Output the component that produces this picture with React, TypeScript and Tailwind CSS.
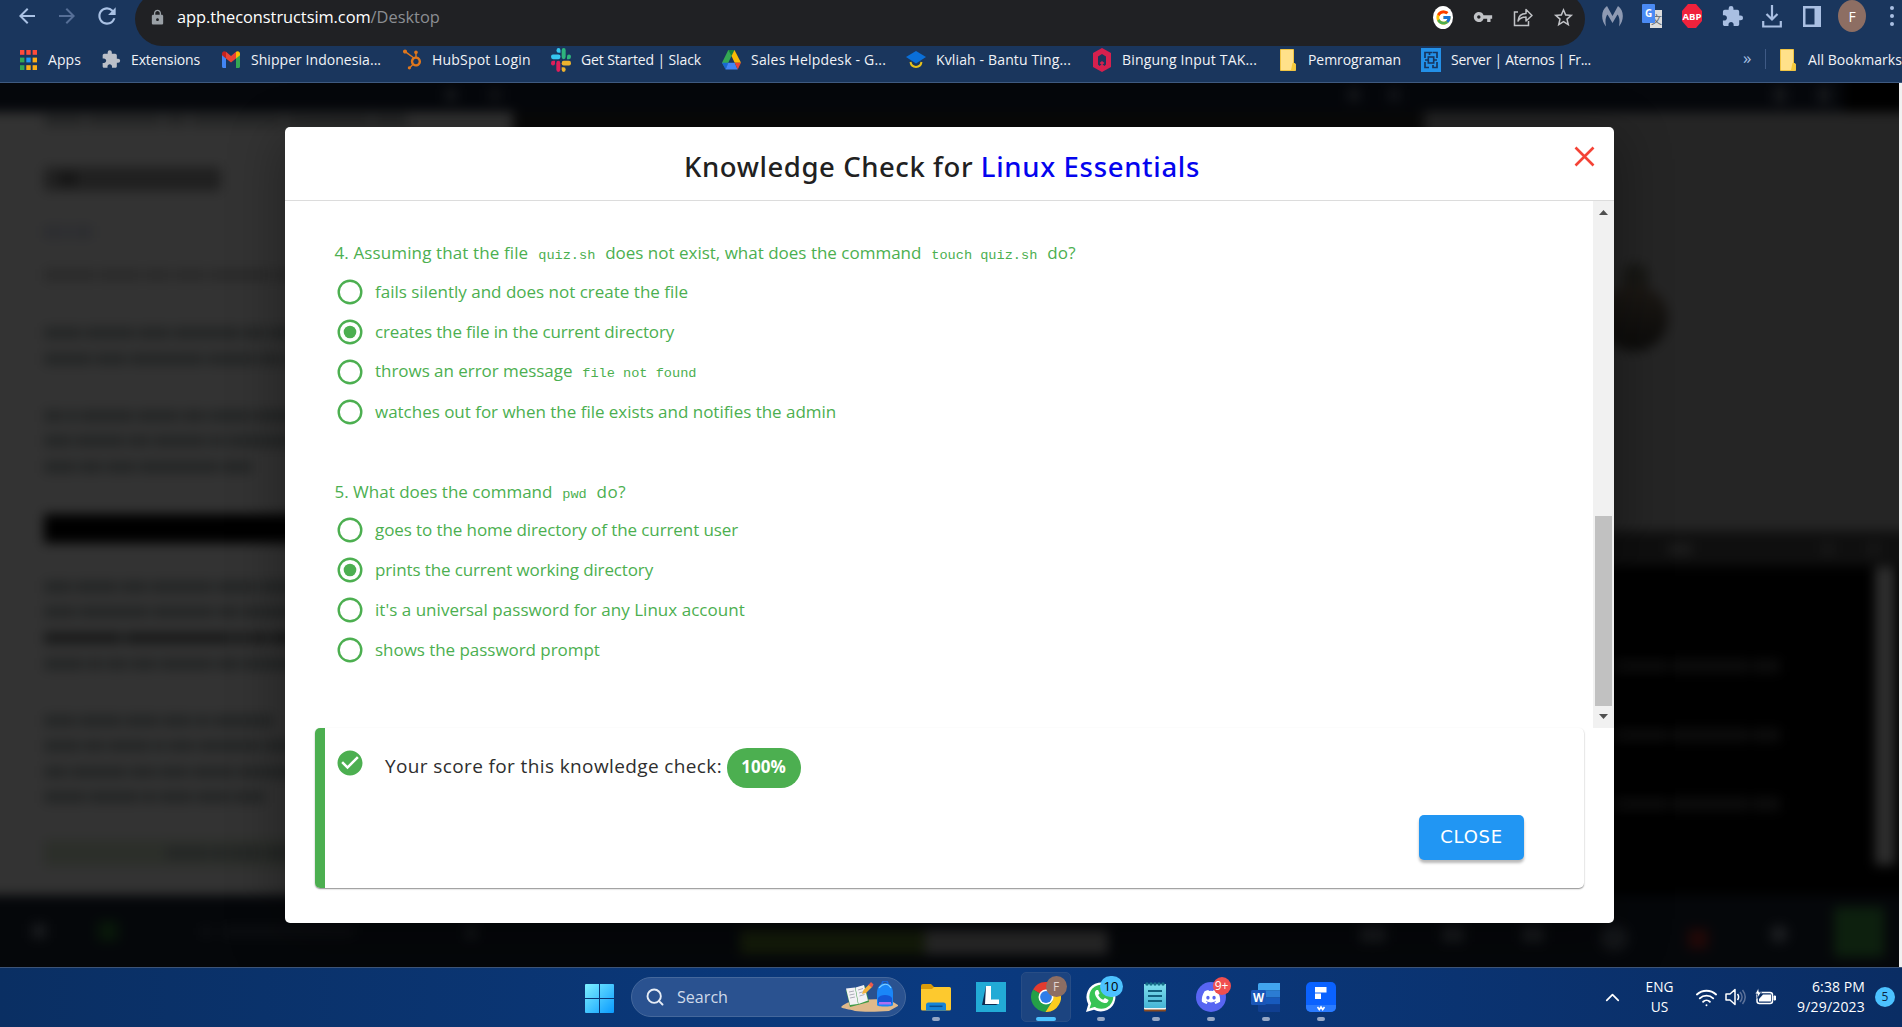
import React from "react";
import { FcGoogle } from "react-icons/fc";
import { FaDiscord, FaHubspot } from "react-icons/fa";
import { MdArrowBack, MdArrowForward, MdExtension, MdLock, MdRefresh, MdStarOutline, MdVpnKey } from "react-icons/md";
import { ChevronUp, Search, Wifi } from "lucide-react";

/* ---------- bookmark icons ---------- */

const AppsIcon = () => (
  <svg width="17" height="20" viewBox="0 0 17 20">
    {["#ff4b3a", "#ff4b3a", "#ff4b3a", "#34a853", "#2196f3", "#fbae17", "#34a853", "#fbae17", "#fbae17"].map((c, i) => (
      <rect key={i} x={(i % 3) * 6.3} y={Math.floor(i / 3) * 7.6} width="4.4" height="4.8" fill={c} />
    ))}
  </svg>
);

const GmailIcon = () => (
  <svg width="18" height="17" viewBox="0 0 18 17">
    <path d="M0 3v12.500c0 .8.6 1.500 1.500 1.500H4V7z" fill="#4285f4" />
    <path d="M18 3v12.500c0 .8-.6 1.500-1.500 1.500H14V7z" fill="#34a853" />
    <path d="M14 1.700V7.500l4-3.200V2.500C18 .3 15.600-.6 14 .8z" fill="#fbbc04" />
    <path d="M0 2.500v1.800l4 3.200V.8C2.400-.6 0 .3 0 2.500z" fill="#c5221f" />
    <path d="M4 .8v6.700l5 4 5-4V.8L9 5z" fill="#ea4335" />
  </svg>
);

const SlackIcon = () => (
  <svg width="20" height="24" viewBox="0 0 24 24" preserveAspectRatio="none">
    <g fill="#36c5f0"><path d="M9 0a2.400 2.400 0 1 0 0 4.800h2.400V2.400A2.400 2.400 0 0 0 9 0z" /><rect x="0" y="6.400" width="11.400" height="4.800" rx="2.400" /></g>
    <g fill="#2eb67d"><path d="M24 8.800a2.400 2.400 0 1 0-4.800 0v2.400h2.400A2.400 2.400 0 0 0 24 8.800z" /><rect x="12.800" y="0" width="4.800" height="11.200" rx="2.400" /></g>
    <g fill="#ecb22e"><path d="M15.200 24a2.400 2.400 0 1 0 0-4.800h-2.400v2.400a2.400 2.400 0 0 0 2.400 2.400z" /><rect x="12.800" y="12.800" width="11.200" height="4.800" rx="2.400" /></g>
    <g fill="#e01e5a"><path d="M0 15.200a2.400 2.400 0 1 0 4.800 0v-2.400H2.400A2.400 2.400 0 0 0 0 15.200z" /><rect x="6.400" y="12.800" width="4.800" height="11.200" rx="2.400" /></g>
  </svg>
);

const DriveIcon = () => (
  <svg width="19" height="20" viewBox="0 0 19 19" preserveAspectRatio="none">
    <path d="M6.300 0h6.200L9.500 5.800 3.500 17.500 0 12z" fill="#34a853" />
    <path d="M6.300 0h6.200L9.500 5.800z" fill="#188038" />
    <path d="M12.500 0 19 12.200h-6.300L9.500 5.800z" fill="#fbbc04" />
    <path d="M0 12.200h6.500L3.500 18.500z" fill="#1967d2" />
    <path d="M6.300 12.200h6.400l3 6.300H3.500z" fill="#4285f4" />
    <path d="M12.700 12.200H19l-3.300 6.300z" fill="#ea4335" />
  </svg>
);

const KvliahIcon = () => (
  <svg width="20" height="18" viewBox="0 0 20 18">
    <path d="M10 0 20 6 10 12.500 0 6z" fill="#0a6fd8" />
    <path d="M4.500 11c1 6.500 10 6.500 11 0" fill="none" stroke="#e8c21c" strokeWidth="2" />
  </svg>
);

const HexIcon = () => (
  <svg width="18" height="24" viewBox="0 0 18 24">
    <path d="M9 0 18 5v14L9 24 0 19V5z" fill="#d6204e" />
    <path d="M9 6 13 8.500v8L11.500 18 9 16l-2.500 2L5 16.500v-8z" fill="#1a365d" />
    <path d="M9 13l2.500 2L9 17l-2.500-2z" fill="#d6204e" />
  </svg>
);

const FolderIcon = () => (
  <svg width="16" height="22" viewBox="0 0 16 22">
    <path d="M.5.500h13V14l2 1v6.500H.500z" fill="#ffe18a" stroke="#f0c443" />
    <path d="M12.500 14h2.500v7h-4z" fill="#f5c93c" />
  </svg>
);

const AternosIcon = () => (
  <svg width="20" height="24" viewBox="0 0 20 24">
    <rect width="20" height="24" fill="#2390e8" />
    <path d="M4 10V4.500h4.500V7M12 4.500h4V10M4 14v5.500h4M16 14v5.500h-4V17M8.500 4.500h3M4 12h3M13 12h3" fill="none" stroke="#17355f" strokeWidth="1.700" />
    <rect x="7.300" y="9" width="5.400" height="6" fill="none" stroke="#17355f" strokeWidth="1.600" />
  </svg>
);

const bookmarks = [
  { label: "Apps", icon: <AppsIcon />, cls: "w-[83px] tracking-[0.09px]" },
  { label: "Extensions", icon: <MdExtension size={21} color="#bcc0c8" />, cls: "w-[120px] tracking-[-0.14px]" },
  { label: "Shipper Indonesia...", icon: <GmailIcon />, cls: "w-[181px] tracking-[0.05px]" },
  { label: "HubSpot Login", icon: <FaHubspot size={23} color="#e0771c" />, cls: "w-[149px] tracking-[0.2px]" },
  { label: "Get Started | Slack", icon: <SlackIcon />, cls: "w-[170px] tracking-[-0.12px]" },
  { label: "Sales Helpdesk - G...", icon: <DriveIcon />, cls: "w-[185px] tracking-[0.2px]" },
  { label: "Kvliah - Bantu Ting...", icon: <KvliahIcon />, cls: "w-[186px] tracking-[0.14px]" },
  { label: "Bingung Input TAK...", icon: <HexIcon />, cls: "w-[186px] tracking-[0.17px]" },
  { label: "Pemrograman", icon: <FolderIcon />, cls: "w-[143px] tracking-[-0.07px]" },
  { label: "Server | Aternos | Fr...", icon: <AternosIcon />, cls: "w-[322px] tracking-[-0.29px]" },
];

/* ---------- browser chrome ---------- */

const Cell = ({ children }: { children: React.ReactNode }) => (
  <div className="flex w-10 shrink-0 items-center justify-center">{children}</div>
);

function Toolbar() {
  return (
    <div className="flex h-[46px] items-start">
      <div className="flex h-8 w-[135px] shrink-0 items-center pl-[7px] text-[#a9c1e4]">
        <Cell><MdArrowBack size={24} /></Cell>
        <Cell><MdArrowForward size={24} color="#566f97" /></Cell>
        <Cell><MdRefresh size={26} /></Cell>
      </div>
      <div className="-mt-2 flex h-[54px] w-[1450px] shrink-0 items-center rounded-full bg-[#202124] pr-[2px] pb-[4px] pl-[14px]">
        <MdLock size={17} color="#9aa0a6" />
        <div className="ml-[11px] grow text-[16.4px] text-[#8b8e92]">
          <span className="tracking-[-0.05px] text-white">app.theconstructsim.com</span>/Desktop
        </div>
        <div className="flex text-[#c0c2c6]">
          <Cell>
            <div className="flex h-[23px] w-[20px] items-center justify-center rounded-[50%] bg-white"><FcGoogle size={17} /></div>
          </Cell>
          <Cell><MdVpnKey size={20} /></Cell>
          <Cell>
            <svg width="20" height="20" viewBox="0 0 20 20" fill="none" stroke="currentColor" strokeWidth="1.500">
              <path d="M5 5H1.500v13.500h14V14" />
              <path d="M5 14c.5-5.500 3.500-7.500 8-7.500V2.500l6 6-6 5.500v-4c-3.500 0-6 .8-8 4z" strokeLinejoin="round" />
            </svg>
          </Cell>
          <Cell><MdStarOutline size={23} /></Cell>
        </div>
      </div>
      <div className="flex h-[32px] shrink-0 items-center pl-[7px] text-[#a9bfe2]">
        <Cell>
          <svg width="21" height="21" viewBox="0 0 21 21" fill="#8e9ab3">
            <path d="M5 0C-1 4-1.500 14 4 20.500 3 15 3.500 11 5.500 8.500L10.500 17 15.500 8.500C17.500 11 18 15 17 20.500 22.500 14 22 4 16 0L10.500 10z" />
          </svg>
        </Cell>
        <Cell>
          <div className="relative h-6 w-5">
            <div className="absolute right-0 bottom-0 flex h-[18px] w-[12px] items-center justify-end bg-[#dcdcdc] text-[11px] text-[#5f6368]" style={{ fontFamily: "'Noto Sans CJK SC', sans-serif" }}>文</div>
            <div className="absolute top-0 left-0 flex h-[19px] w-[13px] items-center justify-center rounded-[1px] bg-[#4a8af4] text-[10px] font-bold text-white">G</div>
          </div>
        </Cell>
        <Cell>
          <svg width="20" height="24" viewBox="0 0 20 24">
            <path d="M6 0h8l6 7v10l-6 7H6l-6-7V7z" fill="#f0223c" />
            <text x="10" y="15.500" textAnchor="middle" fontSize="9.500" fontWeight="700" fill="#fff" fontFamily="Open Sans">ABP</text>
          </svg>
        </Cell>
        <Cell><MdExtension size={23} /></Cell>
        <Cell>
          <svg width="20" height="23" viewBox="0 0 20 23" fill="none" stroke="currentColor" strokeWidth="2.200">
            <path d="M10 0v14M4.500 9 10 14.500 15.500 9M1.200 16v5.500h17.600V16" />
          </svg>
        </Cell>
        <Cell>
          <svg width="18" height="21" viewBox="0 0 18 21"><path d="M0 0h18v21H0zM2.500 2.500v16h9v-16z" fill="currentColor" fillRule="evenodd" /></svg>
        </Cell>
        <Cell><div className="flex h-[32px] w-[28px] items-center justify-center rounded-[50%] bg-[#8d6e63] text-[14px] text-white">F</div></Cell>
        <Cell>
          <div className="flex flex-col gap-[4px]">
            {[0, 1, 2].map((i) => <div key={i} className="h-[4px] w-[4px] rounded-full bg-[#a9bfe2]" />)}
          </div>
        </Cell>
      </div>
    </div>
  );
}

function BookmarksBar() {
  return (
    <div className="flex h-[36px] items-start pl-[18px] text-[14px] whitespace-nowrap text-[#f1f3f7]">
      {bookmarks.map((b) => (
        <div key={b.label} className={`flex h-[27px] shrink-0 items-center gap-[10px] ${b.cls}`}>
          <div className="flex w-5 shrink-0 items-center justify-center">{b.icon}</div>
          <span>{b.label}</span>
        </div>
      ))}
      <div className="flex h-[27px] w-[22px] shrink-0 items-center text-[17px] leading-none text-[#a9c1e4]"><span className="pb-[4px]">»</span></div>
      <div className="mt-[3px] h-[20px] w-px shrink-0 bg-[#3f5a85]" />
      <div className="ml-[12px] flex h-[27px] shrink-0 items-center gap-[10px] tracking-[0.05px]">
        <div className="flex w-5 justify-center"><FolderIcon /></div>
        <span>All Bookmarks</span>
      </div>
    </div>
  );
}

/* ---------- blurred course page behind the dialog ---------- */

const Line = ({ words, tone = "bg-[#242626]", gap = "mt-[13.600px]" }: { words: number[]; tone?: string; gap?: string }) => (
  <div className={`flex h-[12px] shrink-0 gap-[3px] ${gap}`}>
    {words.map((w, i) => <div key={i} className={`h-full shrink-0 ${tone}`} style={{ width: w }} />)}
  </div>
);

const Dot = ({ cls }: { cls: string }) => <div className={`shrink-0 ${cls}`} />;

function CoursePage() {
  return (
    <div className="h-[884px] overflow-hidden bg-black">
      <div className="-mt-5 -ml-5 flex h-[924px] w-[1942px] flex-col blur-[6px]">
        <div className="flex h-[49px] shrink-0 items-center bg-[#05070b] pt-[14px]">
          <Dot cls="ml-[465px] h-3 w-3 bg-[#17191c]" />
          <Dot cls="ml-[32px] h-3 w-3 bg-[#121417]" />
          <Dot cls="ml-[847px] h-3 w-3 bg-[#17191c]" />
          <Dot cls="ml-[28px] h-3 w-3 bg-[#14161a]" />
          <Dot cls="ml-[374px] h-4 w-3 bg-[#17191c]" />
          <Dot cls="ml-[32px] h-4 w-3 bg-[#17191c]" />
          <Dot cls="ml-[14px] h-[40px] w-[60px] bg-black" />
        </div>
        <div className="flex h-[783px] shrink-0">
          <div className="flex w-[533px] shrink-0 flex-col overflow-hidden bg-[#333333] pl-[64px]">
            <Line words={[40, 74, 24, 92, 84, 34]} gap="mt-[2px]" tone="bg-[#242525]" />
            <div className="mt-[41px] flex h-[24px] w-[177px] shrink-0 items-center rounded-[4px] bg-[#202020] pl-4"><div className="h-3 w-4 bg-[#141414]" /></div>
            <Line words={[18, 8, 16]} gap="mt-[35px]" tone="bg-[#2b2c30]" />
            <Line words={[52, 42, 27, 32, 62, 82]} gap="mt-[31px]" tone="bg-[#2a2a2a]" />
            <Line words={[38, 50, 32, 67, 22, 92]} gap="mt-[46px]" />
            <Line words={[48, 32, 74, 48, 22, 62]} />
            <Line words={[20, 10, 54, 42, 24, 42, 80]} gap="mt-[45px]" />
            <Line words={[28, 50, 22, 53, 16, 62, 70]} />
            <Line words={[32, 24, 30, 80, 30]} />
            <div className="mt-[41px] h-[29px] w-full shrink-0 bg-black" />
            <Line words={[28, 43, 27, 62, 40, 70]} gap="mt-[38px]" />
            <Line words={[32, 70, 62, 22, 52, 40]} />
            <Line words={[78, 106, 12, 18, 70]} tone="bg-[#191a1a]" />
            <Line words={[40, 16, 22, 26, 53, 24, 60]} />
            <Line words={[32, 43, 34, 30, 14, 62]} gap="mt-[45px]" />
            <Line words={[36, 22, 42, 12, 27, 62, 40]} />
            <Line words={[24, 56, 26, 30, 42, 60]} />
            <Line words={[42, 50, 14, 34, 34, 32]} />
            <div className="mt-[37px] flex h-[26px] shrink-0 items-center bg-[#2c2f2a] pl-[122px]"><Line words={[42, 16, 32, 62]} gap="" /></div>
          </div>
          <div className="w-[911px] shrink-0 bg-[#080808]" />
          <div className="flex w-[498px] shrink-0 flex-col bg-black">
            <div className="h-[419px] bg-[#252525] pt-[151px] pl-[166px]">
              <div className="ml-[32px] h-[34px] w-[26px] rounded-full bg-[#171714]" />
              <div className="-mt-[12px] ml-[10px] h-[66px] w-[68px] rounded-full bg-gradient-to-b from-[#1c1814] to-[#0b0b0a]" />
            </div>
            <div className="flex h-[35px] items-center bg-[#0f0f0f] pl-[244px]">
              <Dot cls="h-[10px] w-[24px] bg-[#1e1e1e]" />
              <Dot cls="ml-[130px] h-[12px] w-[12px] bg-[#181818]" />
              <Dot cls="ml-[34px] h-[12px] w-[12px] bg-[#181818]" />
            </div>
            <div className="flex h-[329px]">
              <div className="flex w-[451px] flex-col gap-[57px] pt-[94px] pl-[190px]">
                {[0, 1, 2].map((i) => <Line key={i} words={[54, 78, 28]} tone="bg-[#0e0e0e]" gap="" />)}
              </div>
              <div className="mt-[1px] h-[298px] w-[20px] bg-[#2e2e2e]" />
            </div>
          </div>
        </div>
        <div className="flex h-[93px] shrink-0 items-start bg-[#05070a] pt-[12px]">
          <Dot cls="mt-[17px] ml-[52px] h-[14px] w-[14px] bg-[#1a1c1f]" />
          <Dot cls="mt-[14px] ml-[52px] h-[20px] w-[20px] bg-[#08180a]" />
          <Dot cls="mt-[20px] ml-[84px] h-[9px] w-[8px] bg-[#0f1114]" />
          <Dot cls="mt-[20px] ml-[12px] h-[9px] w-[132px] bg-[#0d0f12]" />
          <Dot cls="mt-[20px] ml-[112px] h-[12px] w-[10px] bg-[#17191c]" />
          <Dot cls="mt-[23px] ml-[264px] h-[24px] w-[185px] bg-[#151d0a]" />
          <Dot cls="mt-[23px] h-[24px] w-[183px] bg-[#2b2b2b]" />
          <Dot cls="mt-[20px] ml-[252px] h-[15px] w-[26px] bg-[#191b1e]" />
          <Dot cls="mt-[20px] ml-[56px] h-[15px] w-[22px] bg-[#191b1e]" />
          <Dot cls="mt-[20px] ml-[58px] h-[15px] w-[22px] bg-[#191b1e]" />
          <Dot cls="mt-[18px] ml-[56px] h-[26px] w-[28px] rounded-full bg-[#15171a]" />
          <Dot cls="mt-[22px] ml-[60px] h-[20px] w-[20px] bg-[#220808]" />
          <Dot cls="mt-[18px] ml-[62px] h-[18px] w-[18px] rounded-full bg-[#1c1e21]" />
          <Dot cls="ml-[46px] h-[50px] w-[50px] bg-[#0d200e]" />
        </div>
      </div>
    </div>
  );
}

/* ---------- quiz dialog ---------- */

const Code = ({ children }: { children: React.ReactNode }) => (
  <code className="px-[5.400px] text-[13.600px] tracking-normal" style={{ fontFamily: "'Liberation Mono', monospace" }}>{children}</code>
);

function Radio({ checked }: { checked?: boolean }) {
  return (
    <svg width="30" height="30" viewBox="0 0 30 30" className="shrink-0">
      <circle cx="15" cy="15" r="11.300" fill="none" stroke="#4caf50" strokeWidth="2.400" />
      {checked && <circle cx="15" cy="15" r="6.300" fill="#4caf50" />}
    </svg>
  );
}

const Option = ({ checked, cls = "", children }: { checked?: boolean; cls?: string; children: React.ReactNode }) => (
  <div className="flex h-10 items-center gap-[10.500px]">
    <Radio checked={checked} />
    <span className={cls}>{children}</span>
  </div>
);

function Dialog() {
  return (
    <div className="absolute top-[44px] left-[285px] flex h-[796px] w-[1329px] flex-col overflow-hidden rounded-[5px] bg-white">
      <div
        className="relative flex h-[74px] shrink-0 items-center justify-center border-b border-[#dcdcdc] pt-[7px] pr-[15px] text-[27.500px] font-medium tracking-[0.580px] whitespace-pre text-[#212121]"
        style={{ fontFamily: "'Noto Sans', sans-serif" }}
      >
        Knowledge Check for <span className="tracking-[0.680px] text-[#0404ee]">Linux Essentials</span>
        <svg width="21" height="21" viewBox="0 0 21 21" className="absolute top-[19px] right-[19px]">
          <path d="M1.500 1.500 19.500 19.500M19.500 1.500 1.500 19.500" stroke="#f44336" strokeWidth="2.600" />
        </svg>
      </div>
      <div className="flex h-[527px] shrink-0">
        <div className="flex grow flex-col pt-[31.500px] pl-[49.500px] text-[17px] text-[#4caf50]">
          <div className="flex h-[39px] items-center pt-[2px] whitespace-pre">
            <span><span className="tracking-[0.120px]">4. Assuming that the file </span><Code>quiz.sh</Code> does not exist, what does the command <Code>touch quiz.sh</Code> <span className="tracking-[0.200px]">do?</span></span>
          </div>
          <Option>fails silently and does not create the file</Option>
          <Option checked cls="tracking-[-0.130px]">creates the file in the current directory</Option>
          <Option cls="tracking-[-0.040px]">throws an error message <Code>file not found</Code></Option>
          <Option cls="tracking-[-0.020px]">watches out for when the file exists and notifies the admin</Option>
          <div className="mt-[40px] flex h-[38px] items-center pt-[3px]"><span>5. What does the command <Code>pwd</Code> <span className="tracking-[0.500px]">do?</span></span></div>
          <Option cls="tracking-[-0.090px]">goes to the home directory of the current user</Option>
          <Option checked cls="tracking-[-0.130px]">prints the current working directory</Option>
          <Option cls="tracking-[0.030px]">it's a universal password for any Linux account</Option>
          <Option cls="tracking-[-0.040px]">shows the password prompt</Option>
        </div>
        <div className="flex w-[21px] shrink-0 flex-col items-center bg-[#f1f1f1]">
          <svg width="9" height="5" viewBox="0 0 9 5" className="mt-[9px]"><path d="M4.500 0 9 5H0z" fill="#505050" /></svg>
          <div className="mt-[301px] h-[190px] w-[17px] bg-[#c1c1c1]" />
          <svg width="9" height="5" viewBox="0 0 9 5" className="mt-[8px]"><path d="M4.500 5 9 0H0z" fill="#505050" /></svg>
        </div>
      </div>
      <div className="ml-[30px] flex h-[160px] w-[1269px] flex-col rounded-[5px] border-l-[10px] border-[#4caf50] shadow-[0_1px_1.500px_rgba(0,0,0,0.45)]">
        <div className="flex items-start pt-[20px] pl-[9.500px]">
          <svg width="30" height="30" viewBox="0 0 24 24"><path fill="#4caf50" d="M12 2C6.500 2 2 6.500 2 12s4.500 10 10 10 10-4.500 10-10S17.500 2 12 2m-2 15-5-5 1.410-1.410L10 14.170l7.590-7.590L19 8z" /></svg>
          <div className="ml-[20.500px] flex h-[40px] items-center text-[19px] tracking-[0.380px] text-[#2e2e2e]">
            <span className="pb-[3px]">Your score for this knowledge check:</span>
            <span className="ml-[4.500px] flex h-[40px] w-[74px] items-center justify-center rounded-[20px] bg-[#4caf50] pb-[2px] text-[17px] font-bold tracking-normal text-white">100%</span>
          </div>
        </div>
        <div className="mt-[27px] mr-[60px] flex justify-end">
          <button className="h-[45px] w-[105px] rounded-[5px] bg-[#2196f3] pb-[2px] text-[18px] tracking-[0.700px] text-white shadow-[0_3px_3px_rgba(0,0,0,0.28)]" style={{ fontFamily: "'DejaVu Sans', sans-serif" }}>CLOSE</button>
        </div>
      </div>
    </div>
  );
}

/* ---------- taskbar ---------- */

const WindowsLogo = () => (
  <svg width="29" height="29" viewBox="0 0 29 29">
    <defs><linearGradient id="win" x1="0" y1="0" x2="29" y2="29" gradientUnits="userSpaceOnUse"><stop stopColor="#7df0ff" /><stop offset="1" stopColor="#0a9bff" /></linearGradient></defs>
    <path fill="url(#win)" d="M0 1a1 1 0 0 1 1-1h13v14H0zM15 0h13a1 1 0 0 1 1 1v13H15zM0 15h14v14H1a1 1 0 0 1-1-1zM15 15h14v13a1 1 0 0 1-1 1H15z" />
  </svg>
);

const BeachArt = () => (
  <svg width="58" height="32" viewBox="0 0 58 32">
    <path d="M0 26C5 21 12 20 20 19c12-1 24-1 30 1 4 2 8 4 7 5-3 2-6 3-9 5-12 1-28 1-34 0C8 28 2 28 0 26z" fill="#dfb98b" />
    <path d="M5 9 24 5l4 16L9 26z" fill="#3f9a46" />
    <path d="M5 7.500 14 6.500 17 23 9 24zM14.500 6.500 23 4l4 15.500L17.500 23z" fill="#f3f2f6" />
    <path d="M8 11l5-1M8.500 14l5-1M9 17l5-1M17 9l5-1.500M18 12l5-1.500M18.500 15l5-1.500" stroke="#9a9aa8" strokeWidth=".8" />
    <path d="m21 13 1.500-4L28 3.500 31 6l-6 6z" fill="#f6b23c" /><path d="M27.500 4 30 1l2.500 2.500L31 6.500z" fill="#ee5a4d" />
    <path d="M41 3c0-4 6-4 6 0" fill="none" stroke="#1769e0" strokeWidth="1.500" />
    <path d="M36 12c0-13 16-13 16 0v12c0 2-16 2-16 0z" fill="#1a86f8" />
    <path d="M37 17c2-4 12-4 14 0v5H37z" fill="#1457d6" /><rect x="38" y="21" width="12" height="2.500" fill="#b06ff0" />
    <path d="M38 7c4-5 9-5 12 0" fill="none" stroke="#7fd0ff" strokeWidth="1.200" />
  </svg>
);

const ExplorerIcon = () => (
  <svg width="30" height="27" viewBox="0 0 30 27">
    <path d="M0 2a2 2 0 0 1 2-2h8l3 3v4H0z" fill="#d99a0a" />
    <path d="M0 5h11l2-2h15.500A1.500 1.500 0 0 1 30 4.500V25a1.500 1.500 0 0 1-1.500 1.500h-27A1.500 1.500 0 0 1 0 25z" fill="#fdc92e" />
    <path d="M5 26.500V21a2.500 2.500 0 0 1 2.500-2.500h15A2.500 2.500 0 0 1 25 21v5.500z" fill="#1584d8" /><path d="M8.500 22.300h13" stroke="#0a4c8c" strokeWidth="1.500" />
  </svg>
);

const ChromeIcon = () => (
  <svg width="30" height="30" viewBox="0 0 30 30">
    <path d="M15 15 2 7.500A15 15 0 0 1 28 7.500H15z" fill="#e33b2e" />
    <path d="M15 15 2 7.500A15 15 0 0 0 14.500 30L21.500 18.700z" fill="#24a047" />
    <path d="M15 7.500H28A15 15 0 0 1 14.500 30L21.500 18.700z" fill="#fccc1e" />
    <circle cx="15" cy="15" r="7.500" fill="#fff" /><circle cx="15" cy="15" r="5.900" fill="#2f7de9" />
  </svg>
);

const NotepadIcon = () => (
  <svg width="23" height="30" viewBox="0 0 23 30">
    <defs><linearGradient id="np" x1="0" y1="0" x2="0" y2="1"><stop stopColor="#7fe0ee" /><stop offset="1" stopColor="#45b4d6" /></linearGradient></defs>
    <rect x="0" y="2" width="22" height="27.500" rx="1" fill="#8a4a20" /><rect x="0" y="2" width="22" height="25.500" rx="1" fill="#f4f4f4" /><rect x="0" y="2" width="22" height="24" rx="1" fill="url(#np)" />
    <path d="M4 9h14M4 14h14M4 19h14" stroke="#12617f" strokeWidth="1.800" />
    {[3, 7, 11, 15, 19].map((x) => <circle key={x} cx={x} cy="2" r="1.700" fill="#167089" />)}
  </svg>
);

const WordIcon = () => (
  <svg width="30" height="29" viewBox="0 0 30 29">
    <path d="M7 1.500A1.500 1.500 0 0 1 8.500 0H29v7.500H7z" fill="#41a5ee" /><path d="M7 7.500h22v7H7z" fill="#2b7cd3" /><path d="M7 14.500h22v7H7z" fill="#185abd" /><path d="M7 21.500h22V29H8.500A1.500 1.500 0 0 1 7 27.500z" fill="#103f91" />
    <rect x="0" y="7" width="15" height="15" rx="1.500" fill="#1a56b8" />
    <text x="7.500" y="18.500" textAnchor="middle" fontSize="11.500" fontWeight="700" fill="#fff" fontFamily="Open Sans">W</text>
  </svg>
);

const FlipIcon = () => (
  <svg width="30" height="30" viewBox="0 0 30 30">
    <rect width="30" height="30" rx="5" fill="#0a62ff" /><path d="M0 23h30v2a5 5 0 0 1-5 5H5a5 5 0 0 1-5-5z" fill="#2a7bff" />
    <path d="M9 5h11.500v5.500H9zM9 11.500h6v5.500H9z" fill="#fff" /><path d="m11.500 25 1.800 2.500L15 25l1.700 2.500 1.800-2.500" fill="none" stroke="#fff" strokeWidth="1.600" />
  </svg>
);

const WhatsAppIcon = () => (
  <svg width="30" height="30" viewBox="0 0 30 30">
    <path d="M0 30 2.300 22.200A14.500 14.500 0 1 1 8 27.800z" fill="#fff" />
    <circle cx="15.300" cy="14.800" r="12" fill="#38c455" /><path d="m3.500 26.500 2-6 4.500 4z" fill="#38c455" />
    <path d="M10.500 8c-1.800 1-2 3-1.200 5 1.500 4 5 7 9 8 2 .5 4-.8 4.300-3l-3.700-2-1.700 1.700c-2.200-.8-4-2.400-5-4.700l1.400-1.500-1.500-3.500z" fill="#fff" />
  </svg>
);

const badge = "absolute flex items-center justify-center rounded-full";

const tasks: { name: string; icon: React.ReactNode; active?: boolean; idle?: boolean }[] = [
  { name: "explorer", icon: <ExplorerIcon /> },
  {
    name: "l", idle: true,
    icon: (
      <svg width="30" height="30" viewBox="0 0 30 30"><rect width="30" height="30" fill="#22abd6" /><path d="m10 4-4 19h14l3-1.500-7-2z" fill="#0e2a50" /><path d="M10 4h5v13.500h8V22H9z" fill="#fff" /></svg>
    ),
  },
  { name: "chrome", active: true, icon: <><ChromeIcon /><div className={`${badge} -top-[6px] left-[15px] h-[21px] w-[21px] bg-[#8d6e63] text-[12px] text-[#e0d5d0]`}>F</div></> },
  { name: "whatsapp", icon: <><WhatsAppIcon /><div className={`${badge} -top-[6px] left-[14px] h-[21px] w-[23px] bg-[#4cc2ff] text-[13px] text-black`}>10</div></> },
  { name: "notepad", icon: <NotepadIcon /> },
  {
    name: "discord",
    icon: <><div className="flex h-[30px] w-[30px] items-center justify-center rounded-full bg-[#5865f2]"><FaDiscord size={20} color="#fff" /></div><div className={`${badge} -top-[5px] left-[17px] h-[18px] w-[18px] bg-[#f04f4f] text-[12px] text-white`}>9+</div></>,
  },
  { name: "word", icon: <WordIcon /> },
  { name: "flip", icon: <FlipIcon /> },
];

function Taskbar() {
  return (
    <div className="flex h-[60px] border-t border-[#3d5478] bg-gradient-to-r from-[#0a2f63] via-[#0a3a80] to-[#0a2d64] text-white">
      <div className="ml-[585px] flex h-[60px] items-center"><WindowsLogo /></div>
      <div className="mt-[9px] ml-[17px] flex h-[40px] w-[275px] items-center rounded-full border border-[#45689c] bg-[#2a5290] pr-[6px] pl-[13px]">
        <Search size={20} strokeWidth={2.300} className="text-[#e6ecf5]" />
        <span className="ml-[12px] grow text-[16.100px] text-[#cfdaea]">Search</span>
        <BeachArt />
      </div>
      <div className="ml-[2px] flex pt-[4px]">
        {tasks.map((t) => (
          <div key={t.name} className="flex w-[55px] justify-center">
            <div className={`flex h-[50px] w-[50px] flex-col items-center rounded-[5px] ${t.active ? "border border-[#284d85] bg-[#1c4480]" : "border border-transparent"}`}>
              <div className="relative mt-[9px] flex h-[30px] items-center">{t.icon}</div>
              {!t.idle && <div className={`mt-[5px] h-[4px] rounded-full ${t.active ? "w-[20px] bg-[#4cc2ff]" : "w-[8px] bg-[#94a6c4]"}`} />}
            </div>
          </div>
        ))}
      </div>
      <div className="ml-auto flex items-center pr-[7px] pb-[1px] text-[14px]">
        <ChevronUp size={23} strokeWidth={1.800} />
        <div className="ml-[21px] w-[29px] text-center text-[13.700px] leading-[20px]">ENG US</div>
        <Wifi size={23} strokeWidth={2} className="ml-[21px]" />
        <svg width="21" height="18" viewBox="0 0 21 18" fill="none" stroke="#fff" strokeWidth="1.500" className="ml-[7px]">
          <path d="M1 6v6h4l5 4.500v-15L5 6z" strokeLinejoin="round" /><path d="M12.500 6c1.500 2 1.500 4 0 6" />
          <path d="M15 4c2.500 3 2.500 7 0 10M17.500 2c3.500 4.500 3.500 9.500 0 14" stroke="#5c7199" />
        </svg>
        <svg width="21" height="18" viewBox="0 0 21 18" className="ml-[9px]">
          <rect x="2" y="4.500" width="15.500" height="11" rx="2.500" fill="none" stroke="#fff" strokeWidth="1.500" /><path d="M8 6.500h8v7H4V11z" fill="#fff" /><path d="M19 8v4h1.500V8z" fill="#fff" stroke="#fff" />
          <path d="M3.500 0 0 6h2.500L2 10.500 6.500 4H4z" fill="#fff" stroke="#0a2f67" strokeWidth=".7" />
        </svg>
        <div className="ml-[21px] text-right leading-[20px]">
          <div className="tracking-[0.090px]">6:38 PM</div>
          <div className="tracking-[0.190px]">9/29/2023</div>
        </div>
        <div className="ml-[10px] flex h-[20px] w-[20px] items-center justify-center rounded-full bg-[#4cc2ff] text-[12px] text-[#0b2545]">5</div>
      </div>
    </div>
  );
}

export default function App() {
  return (
    <div className="h-[1027px] w-[1902px] overflow-hidden bg-[#1a365d]" style={{ fontFamily: "'Open Sans', 'Noto Sans', sans-serif" }}>
      <Toolbar />
      <BookmarksBar />
      <div className="h-px bg-[#3f5a80]" />
      <div className="relative flex h-[884px]">
        <div className="w-[1899px] shrink-0"><CoursePage /></div>
        <div className="w-[3px] bg-[#f1f1f1]" />
        <div className="absolute inset-y-0 left-0 w-[1899px] overflow-hidden">
          <div className="absolute top-[44px] left-[285px] h-[796px] w-[1329px] shadow-[0_14px_48px_6px_rgba(0,0,0,0.3)]" />
          <Dialog />
        </div>
      </div>
      <Taskbar />
    </div>
  );
}
